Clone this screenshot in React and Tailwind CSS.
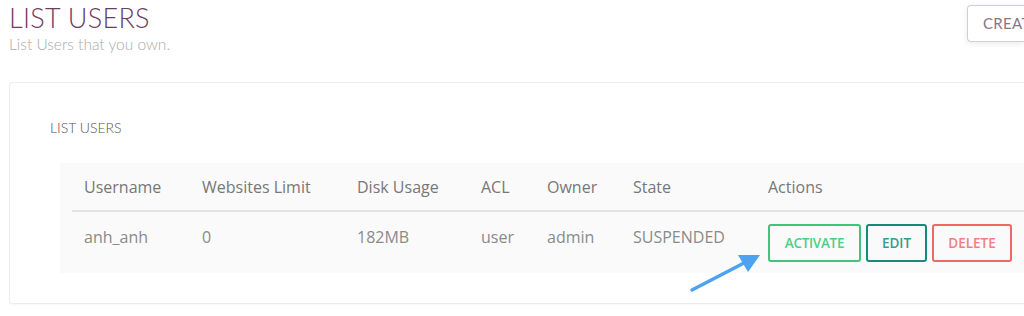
export default function App() {
  const cols = "grid grid-cols-[130px_155px_124px_66px_86px_135px_1fr]";
  return (
    <div className="relative w-[1024px] h-[316px] overflow-hidden bg-white" style={{ fontFamily: '"Open Sans", sans-serif' }}>
      <div className="flex justify-between pl-[9px]">
        <div className="pt-[2px]" style={{ fontFamily: 'Lato, sans-serif' }}>
          <div className="text-[27px] leading-[32px] font-light text-[#6e3b63] tracking-[0.3px]">LIST USERS</div>
          <div className="text-[15.5px] leading-[18px] font-light text-[#aaaaaa] mt-[1px]">List Users that you own.</div>
        </div>
        <div className="mt-[5px] w-[57px] h-[37px] border border-[#d8c9d4] rounded-l-[4px] border-r-0 shadow-[0_2px_6px_rgba(0,0,0,0.08)] flex items-center pl-[15px] overflow-hidden">
          <span className="text-[15px] text-[#8a7487] tracking-[0.3px] whitespace-nowrap" style={{ fontFamily: 'Lato, sans-serif' }}>CREATE</span>
        </div>
      </div>
      <div className="ml-[9px] mt-[29px] w-[1040px] h-[222px] border border-[#ececec] rounded-[4px] bg-white shadow-[0_1px_2px_rgba(0,0,0,0.04)]">
        <div className="pl-[40px] pt-[35px] text-[14px] leading-[20px] text-[#555] font-light" style={{ fontFamily: 'Lato, sans-serif' }}>LIST USERS</div>
        <div className="ml-[50px] mt-[25px] h-[110px] bg-[#fafafa] pl-[12px]">
          <div className={`${cols} h-[49px] items-center border-b-2 border-[#e4e4e4] text-[16px] text-[#777] pt-[1px]`}>
            <div className="pl-[12px]">Username</div>
            <div>Websites Limit</div>
            <div>Disk Usage</div>
            <div>ACL</div>
            <div>Owner</div>
            <div>State</div>
            <div>Actions</div>
          </div>
          <div className={`${cols} h-[50px] items-start pt-[12px] text-[16px] text-[#8a8a8a]`}>
            <div className="pl-[12px] pt-[1px]">anh_anh</div>
            <div className="pt-[1px]">0</div>
            <div className="pt-[1px]">182MB</div>
            <div className="pt-[1px]">user</div>
            <div className="pt-[1px]">admin</div>
            <div className="pt-[1px]">SUSPENDED</div>
            <div className="flex gap-[5px]">
              <div className="w-[93px] h-[38px] border-2 border-[#3ec47d] rounded-[3px] flex items-center justify-center text-[13.5px] font-semibold text-[#4ccf88] tracking-[-0.3px]">ACTIVATE</div>
              <div className="w-[61px] h-[38px] border-2 border-[#178a7c] rounded-[3px] flex items-center justify-center text-[13.5px] font-semibold text-[#2f9e8e]">EDIT</div>
              <div className="w-[80px] h-[38px] border-2 border-[#ee6868] rounded-[3px] flex items-center justify-center text-[13.5px] font-semibold text-[#f27f7f]">DELETE</div>
            </div>
          </div>
        </div>
      </div>
      <svg className="absolute left-0 top-0" width="1024" height="316" viewBox="0 0 1024 316">
        <line x1="692" y1="290" x2="744" y2="263" stroke="#4ea2f2" strokeWidth="3.5" strokeLinecap="round" />
        <polygon points="760,255 738,255 748,272" fill="#4ea2f2" />
      </svg>
    </div>
  );
}
